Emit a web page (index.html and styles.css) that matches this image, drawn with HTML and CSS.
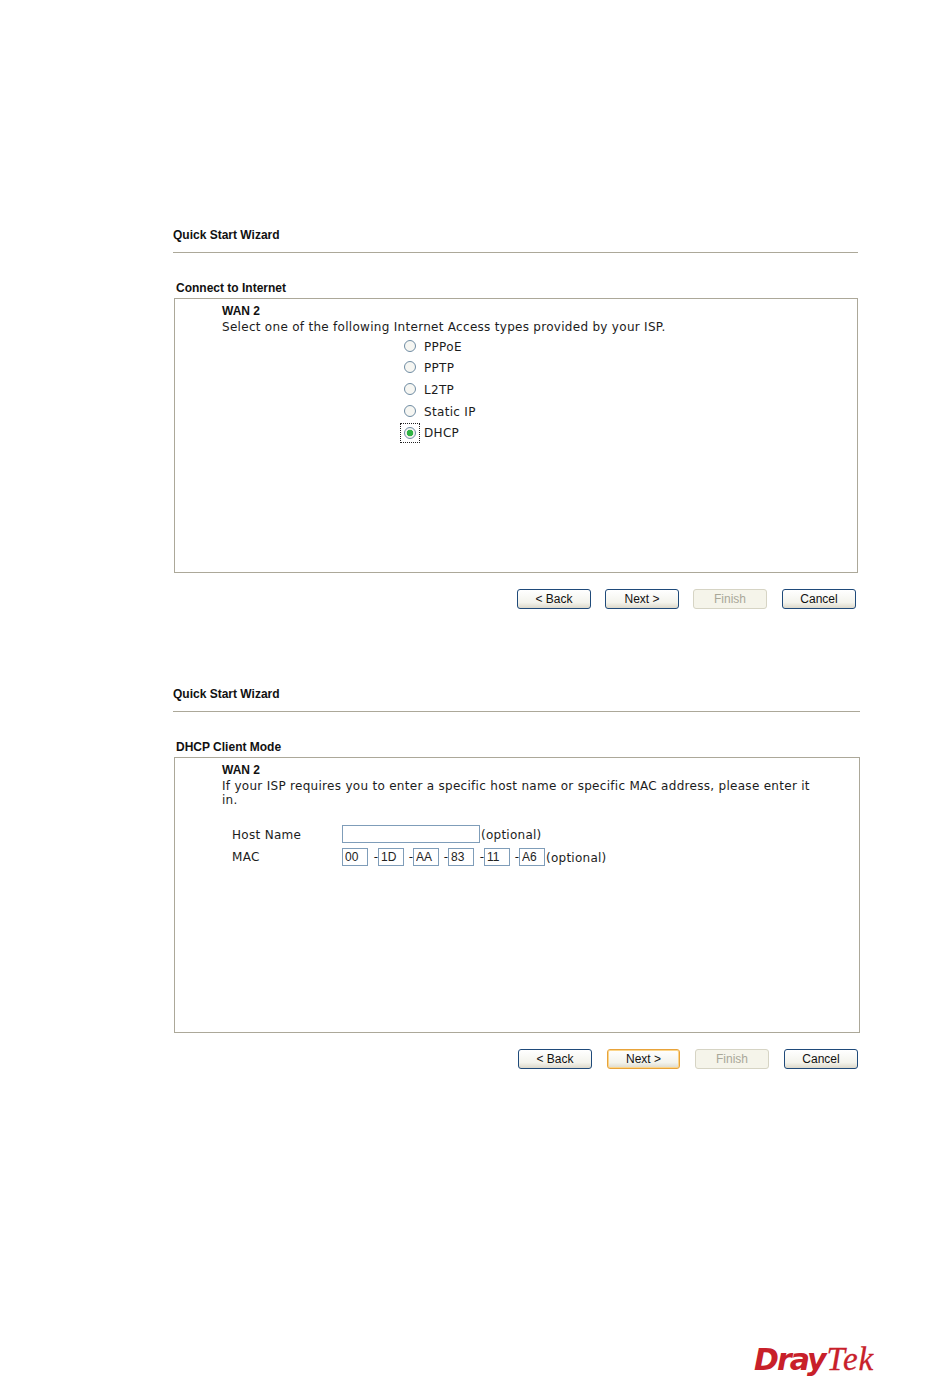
FILE: index.html
```html
<!DOCTYPE html>
<html lang="en">
<head>
<meta charset="utf-8">
<title>Quick Start Wizard</title>
<link rel="stylesheet" href="styles.css">
</head>
<body>
<main class="page">
  <section class="wizard wizard-first">
    <h1 class="wizard-title">Quick Start Wizard</h1>
    <hr class="rule">
    <h2 class="box-title">Connect to Internet</h2>
    <div class="box">
      <div class="wan">WAN 2</div>
      <p class="intro">Select one of the following Internet Access types provided by your ISP.</p>
      <div class="options">
        <label class="option"><span class="radio-wrap"><input class="radio" type="radio" name="t"></span>PPPoE</label>
        <label class="option"><span class="radio-wrap"><input class="radio" type="radio" name="t"></span>PPTP</label>
        <label class="option"><span class="radio-wrap"><input class="radio" type="radio" name="t"></span>L2TP</label>
        <label class="option"><span class="radio-wrap"><input class="radio" type="radio" name="t"></span>Static IP</label>
        <label class="option"><span class="radio-wrap focus"><input class="radio" type="radio" name="t" checked></span>DHCP</label>
      </div>
    </div>
    <div class="actions">
      <button class="btn" type="button">&lt; Back</button>
      <button class="btn" type="button">Next &gt;</button>
      <button class="btn" type="button" disabled>Finish</button>
      <button class="btn" type="button">Cancel</button>
    </div>
  </section>

  <section class="wizard wizard-second">
    <h1 class="wizard-title">Quick Start Wizard</h1>
    <hr class="rule">
    <h2 class="box-title">DHCP Client Mode</h2>
    <div class="box">
      <div class="wan">WAN 2</div>
      <p class="intro">If your ISP requires you to enter a specific host name or specific MAC address, please enter it in.</p>
      <div class="field field-host">
        <span class="field-label">Host Name</span>
        <input class="text-input host" type="text">
        <span class="hint">(optional)</span>
      </div>
      <div class="field field-mac">
        <span class="field-label">MAC</span>
        <input class="text-input octet" type="text" value="00"><span class="dash dash-wide">-</span>
        <input class="text-input octet" type="text" value="1D"><span class="dash">-</span>
        <input class="text-input octet" type="text" value="AA"><span class="dash">-</span>
        <input class="text-input octet" type="text" value="83"><span class="dash dash-wide">-</span>
        <input class="text-input octet" type="text" value="11"><span class="dash">-</span>
        <input class="text-input octet" type="text" value="A6">
        <span class="hint">(optional)</span>
      </div>
    </div>
    <div class="actions">
      <button class="btn" type="button">&lt; Back</button>
      <button class="btn btn-default" type="button">Next &gt;</button>
      <button class="btn" type="button" disabled>Finish</button>
      <button class="btn" type="button">Cancel</button>
    </div>
  </section>

  <footer class="brand"><span class="brand-dray">Dray</span><span class="brand-tek">Tek</span></footer>
</main>
</body>
</html>
```
FILE: styles.css
```css
* { box-sizing: border-box; }
html, body { margin: 0; padding: 0; background: #fff; }
body { height: 1387px; overflow: hidden; font-family: "DejaVu Sans", sans-serif; font-size: 12px; color: #1c1c1c; }
.page { display: flex; flex-direction: column; padding: 228px 0 0 173px; height: 1387px; }
.wizard-first { width: 685px; }
.wizard-second { width: 687px; margin-top: 78px; }
.wizard-title { margin: 0; font: bold 12px/14px "Liberation Sans", sans-serif; color: #111; }
.rule { margin: 10px 0 0; border: 0; height: 1px; background: #aca899; }
.box-title { margin: 28px 0 0 3px; font: bold 12px/14px "Liberation Sans", sans-serif; color: #111; height: 17px; }
.box { height: 275px; margin-left: 1px; border: 1px solid #aca899; padding: 4px 40px 0 47px; }
.wizard-second .box { height: 276px; }
.wan { font: bold 12px/16px "Liberation Sans", sans-serif; color: #111; height: 17px; }
.intro { margin: 0; font-size: 12px; line-height: 14px; letter-spacing: 0.29px; }
.options { display: flex; flex-direction: column; margin: 2px 0 0 178px; }
.option { display: flex; align-items: center; height: 21.6px; letter-spacing: 0.32px; }
.radio-wrap { display: flex; width: 20px; height: 20px; align-items: center; justify-content: center; border: 1px solid transparent; margin-right: 4px; padding-bottom: 2px; }
.radio-wrap.focus { border: 1px dotted #222; padding-bottom: 0; }
.radio { appearance: none; margin: 0; width: 12px; height: 12px; border: 1px solid #6f8ca3; border-radius: 50%; background: #f6f6f2; }
.radio:checked { background: radial-gradient(circle, #2fb344 0 3px, #f4f4f0 3.6px); }
.actions { display: flex; margin-top: 16px; }
.wizard-first .actions { padding-left: 344px; }
.wizard-second .actions { padding-left: 345px; }
.btn { flex: none; width: 74px; height: 20px; padding: 0; margin-right: 14px; border: 1px solid #1f4a7a; border-radius: 3px; background: linear-gradient(#ffffff, #f3f3ec 70%, #dcd8ca); font: 12px/16px "Liberation Sans", sans-serif; color: #111; }
.btn:last-child { margin-right: 0; }
.wizard-first .btn:nth-child(3) { margin-right: 15px; }
.btn:disabled { border-color: #d6d4c4; background: #f5f4ea; color: #a9a899; }
.btn-default { width: 73px; margin-right: 15px; border-color: #e8a33a; box-shadow: inset 0 0 0 1px #fbd58a; }
.wizard-second .btn:first-child { margin-right: 15px; }
.wizard-second .btn:nth-child(3) { margin-right: 15px; }
.field { display: flex; align-items: center; padding-left: 10px; }
.field-host { margin-top: 18px; height: 18px; }
.field-mac { margin-top: 4px; height: 19px; }
.field-label { width: 110px; letter-spacing: 0.3px; font-size: 12px; padding-top: 1px; }
.text-input { flex: none; height: 18px; padding: 0 2px; border: 1px solid #7f9db9; border-radius: 0; background: #fff; font: 12px/16px "Liberation Sans", sans-serif; color: #222; outline: 0; }
.host { width: 138px; }
.octet { width: 26px; }
.dash { width: 9px; text-align: right; }
.dash-wide { width: 10px; }
.hint { margin-left: 1px; letter-spacing: 0.25px; padding-top: 2px; }
.brand { margin: auto 0 10px 581px; height: 36px; line-height: 36px; white-space: nowrap; color: #c8202a; }
.brand-dray { font: italic bold 30px/36px "DejaVu Sans", sans-serif; letter-spacing: -2px; }
.brand-tek { font: italic 33px/36px "Liberation Serif", serif; margin-left: 2px; letter-spacing: 1px; -webkit-text-stroke: 0.3px #c8202a; }
```
